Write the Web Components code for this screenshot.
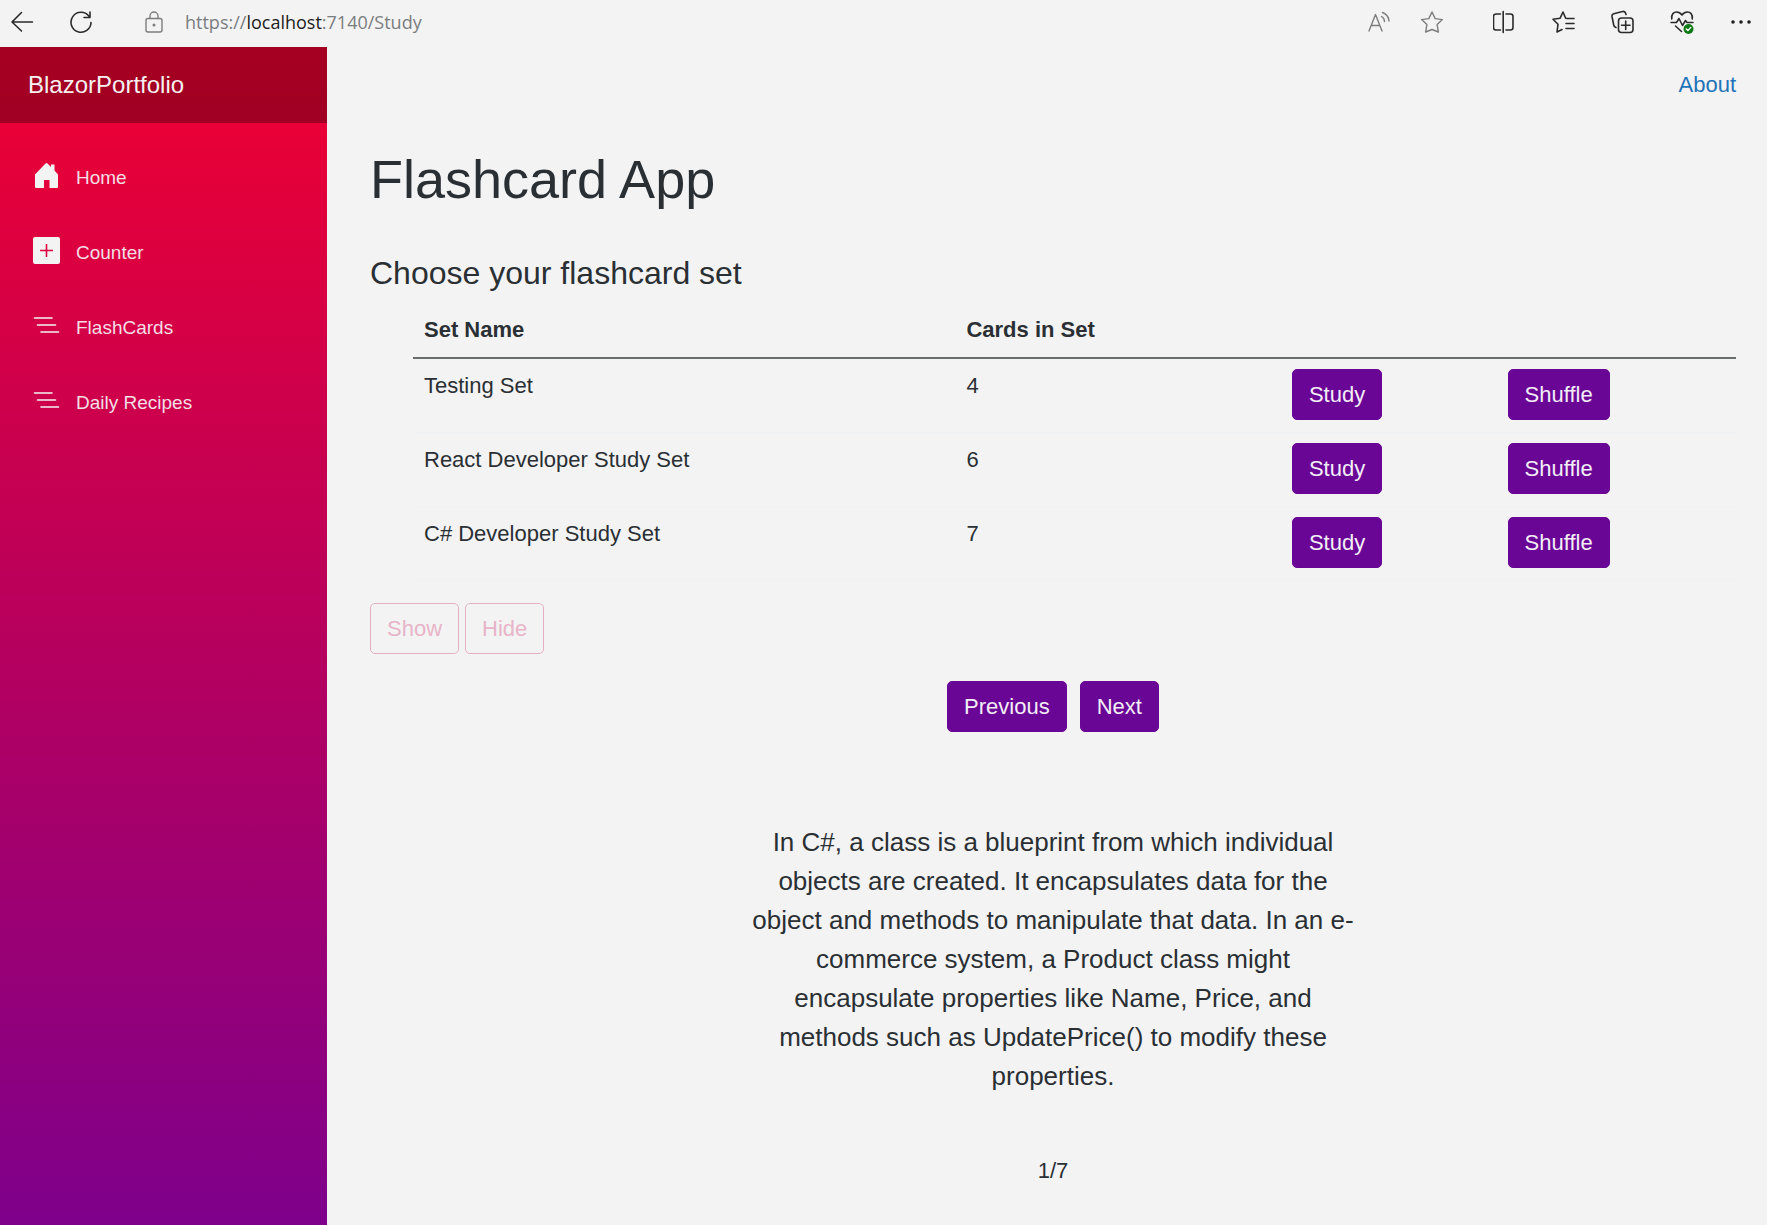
<!DOCTYPE html>
<html lang="en">
<head>
<meta charset="utf-8">
<title>Flashcard App</title>
<style>
  html, body { margin: 0; }
  body {
    min-height: 100vh;
    display: flex;
    flex-direction: column;
    background: #f3f3f3;
    color: #2a2f34;
    font: 22px/33px "Liberation Sans", Arial, sans-serif;
  }
</style>
</head>
<body>
<browser-bar></browser-bar>
<app-layout>
  <app-sidebar slot="sidebar" brand="BlazorPortfolio">
    <nav-link icon="home">Home</nav-link>
    <nav-link icon="plus">Counter</nav-link>
    <nav-link icon="list">FlashCards</nav-link>
    <nav-link icon="list">Daily Recipes</nav-link>
  </app-sidebar>
  <study-page></study-page>
</app-layout>

<script>
class BaseElement extends HTMLElement {
  connectedCallback() {
    if (this.shadowRoot) return;
    this.attachShadow({ mode: "open" }).innerHTML = this.render();
  }
}

/* Browser toolbar */
customElements.define("browser-bar", class extends BaseElement {
  render() {
    return `
<style>
  :host { display: block; }
  header { display: flex; align-items: center; height: 47px; padding: 0 14px 4px 10px; box-sizing: border-box; }
  button { border: 0; padding: 0; background: none; width: 24px; height: 24px; flex: none; }
  svg { display: block; width: 24px; height: 24px; fill: none; stroke: #2b2b2b; stroke-width: 1.6; stroke-linecap: round; stroke-linejoin: round; }
  .muted svg { stroke: #7d7d7d; stroke-width: 1.4; }
  .history { display: flex; gap: 35px; }
  .address { display: flex; align-items: center; flex: 1; gap: 19px; padding-left: 49px; }
  .url { color: #7a7d80; font: 18px/24px "Open Sans", "Noto Sans", sans-serif; }
  .url b { color: #1c1c1c; font-weight: 400; }
  .page { display: flex; gap: 29px; padding-right: 49px; }
  .tools { display: flex; gap: 35px; }
</style>
<header>
  <div class="history">
    <button aria-label="Back"><svg viewBox="0 0 24 24"><path d="M22.500 12H2M11.500 2.500L2 12l9.500 9"/></svg></button>
    <button aria-label="Refresh"><svg viewBox="0 0 24 24"><path d="M22 12.500A10 10 0 1 1 19.800 6M21 2v5.500h-6"/></svg></button>
  </div>
  <div class="address">
    <button class="muted" aria-label="Site information"><svg viewBox="0 0 24 24"><rect x="4" y="8.500" width="16" height="13.500" rx="2"/><path d="M8 8.500V6a4 4 0 0 1 8 0v2.500"/><circle cx="12" cy="15" r=".8" fill="#7d7d7d"/></svg></button>
    <span class="url">https://<b>localhost</b>:7140/Study</span>
  </div>
  <div class="page">
    <button class="muted" aria-label="Read aloud"><svg viewBox="0 0 24 24"><path d="M2 21L8.500 4.500 15 21M4.500 15.500h8M14.500 6.500a6 6 0 0 1 3 5M15.500 2.500a10 10 0 0 1 6.500 8.500"/></svg></button>
    <button class="muted" aria-label="Add to favorites"><svg viewBox="0 0 24 24"><path d="M12 2l3.200 6.600 7.200 1-5.300 5 1.300 7.400L12 19.500 5.600 22l1.300-7.400-5.300-5 7.200-1z"/></svg></button>
  </div>
  <div class="tools">
    <button aria-label="Split screen"><svg viewBox="0 0 24 24"><path d="M7.500 4H3a2.500 2.500 0 0 0-2.500 2.500v11A2.500 2.500 0 0 0 3 20h4.500M13 4h4.500A2.500 2.500 0 0 1 20 6.500v11a2.500 2.500 0 0 1-2.500 2.500H13M10.200 1.500v21" /></svg></button>
    <button aria-label="Favorites"><svg viewBox="0 0 24 24"><path d="M15 8.500L13.700 8.200 11 2 8 8.300l-7 1 5 5L5 22l5-2.500M15 8.500h7M14 13.500H22M14 18.500H22"/></svg></button>
    <button aria-label="Collections"><svg viewBox="0 0 24 24"><rect x="7.500" y="8" width="14.500" height="14.500" rx="3"/><path d="M14.700 11v8.500M10.500 15.200h8.500M5 17.500C3.500 17 3 16.500 2.700 15L1 6.500a2.500 2.500 0 0 1 1.800-2.800l8.700-2.200a2.500 2.500 0 0 1 3.100 1.700l.4 1.300"/></svg></button>
    <button aria-label="Browser essentials"><svg viewBox="0 0 24 24"><path d="M1.800 9C1 4 4 2 6.500 2 9 2 10.500 3 12 5c1.500-2 3-3 5.500-3S23 4 22.200 9M1 12.500h5.500l2.500-4 3.500 7 3-5 1.500 2h6M5.500 16l6 5.500"/><circle cx="18.500" cy="19" r="5" fill="#0f7b16" stroke="none"/><path d="M16.300 19l1.600 1.600 2.900-3.200" stroke="#fff" stroke-width="1.400"/></svg></button>
    <button aria-label="Settings and more"><svg viewBox="0 0 24 24"><g fill="#222" stroke="none"><circle cx="4" cy="12" r="1.800"/><circle cx="12" cy="12" r="1.800"/><circle cx="20" cy="12" r="1.800"/></g></svg></button>
  </div>
</header>`;
  }
});

/* Sidebar and content side by side */
customElements.define("app-layout", class extends BaseElement {
  render() {
    return `
<style>
  :host { display: flex; flex: 1; }
  main { flex: 1; min-width: 0; }
</style>
<slot name="sidebar"></slot>
<main><slot></slot></main>`;
  }
});

customElements.define("app-sidebar", class extends BaseElement {
  render() {
    return `
<style>
  :host { display: block; flex: 0 0 327px; background: linear-gradient(180deg, #f00030 0%, #7e008b 100%); }
  .brand { display: flex; align-items: center; height: 76px; padding: 0 0 2px 28px; box-sizing: border-box; background: rgba(0, 0, 0, .31); }
  .brand a { color: #f6f0f1; text-decoration: none; font-size: 24px; }
  nav { display: flex; flex-direction: column; gap: 11px; padding-top: 22px; }
</style>
<div class="brand"><a href="#">${this.getAttribute("brand")}</a></div>
<nav><slot></slot></nav>`;
  }
});

const NAV_ICONS = {
  home: `<path d="M2 12.500L12.500 1.500a1.500 1.500 0 0 1 2 0L18 5V2.500h3.500V8.500l3.500 4V25a1 1 0 0 1-1 1h-7.500v-8h-5.500v8H3a1 1 0 0 1-1-1z"/>`,
  plus: `<path fill-rule="evenodd" d="M2 0h23a2 2 0 0 1 2 2v23a2 2 0 0 1-2 2H2a2 2 0 0 1-2-2V2a2 2 0 0 1 2-2zm10.700 7v5.700H7v1.600h5.700V20h1.600v-5.700H20v-1.600h-5.700V7z"/>`,
  list: `<path d="M1.500 6H19M4.500 13H22.500M8 20h17.500" stroke="#f3f3f3" stroke-width="1.600" stroke-linecap="round"/>`
};

customElements.define("nav-link", class extends BaseElement {
  render() {
    return `
<style>
  :host { display: block; }
  a { display: flex; align-items: center; gap: 16px; height: 64px; padding-left: 33px; color: #f3dfe5; text-decoration: none; font-size: 19px; }
  svg { width: 27px; height: 30px; fill: #f3f3f3; }
</style>
<a href="#"><svg viewBox="0 0 27 30" aria-hidden="true">${NAV_ICONS[this.getAttribute("icon")]}</svg><span><slot></slot></span></a>`;
  }
});

customElements.define("app-button", class extends BaseElement {
  render() {
    const off = this.hasAttribute("disabled");
    return `
<style>
  :host { display: inline-block; vertical-align: top; }
  button { display: block; font: inherit; padding: 8px 16px; border: 1px solid #6a0696; border-radius: 5px; background: #6a0696; color: #f3eef6; }
  button:disabled { background: none; border-color: #e6afc5; color: #e8b4c8; }
</style>
<button type="button"${off ? " disabled" : ""}><slot></slot></button>`;
  }
});

customElements.define("set-table", class extends BaseElement {
  render() {
    const sets = [["Testing Set", 4], ["React Developer Study Set", 6], ["C# Developer Study Set", 7]];
    return `
<style>
  :host { display: block; padding-left: 43px; }
  table { width: 100%; table-layout: fixed; border-collapse: separate; border-spacing: 0; }
  th, td { padding: 11px; text-align: left; vertical-align: top; }
  thead th, thead td { border-bottom: 2px solid #6b6e6e; }
  tbody td { border-bottom: 1px solid #eff2f5; padding: 10px 11px 12px; }
  .name { width: 41%; } .count { width: 24.6%; } .study { width: 16.3%; }
</style>
<table>
  <colgroup><col class="name"><col class="count"><col class="study"><col></colgroup>
  <thead><tr><th>Set Name</th><th>Cards in Set</th><td></td><td></td></tr></thead>
  <tbody>${sets.map(([name, n]) => `
    <tr><td>${name}</td><td>${n}</td><td><app-button>Study</app-button></td><td><app-button>Shuffle</app-button></td></tr>`).join("")}
  </tbody>
</table>`;
  }
});

customElements.define("study-page", class extends BaseElement {
  render() {
    return `
<style>
  :host { display: block; padding: 0 31px 36px 43px; }
  .top { display: flex; justify-content: flex-end; align-items: center; height: 75px; }
  .top a { color: #1f74b8; text-decoration: none; }
  h1, h2, p { margin: 0; font-weight: 400; }
  h1 { font-size: 54px; line-height: 65px; margin: 25px 0 42px; }
  h2 { font-size: 32px; line-height: 38px; margin-bottom: 10px; }
  .reveal { display: flex; gap: 6px; margin-top: 22px; }
  .pager { display: flex; justify-content: center; gap: 13px; margin-top: 27px; }
  .card { max-width: 606px; margin: 91px auto 58px; font-size: 26px; line-height: 39px; text-align: center; }
  .progress { text-align: center; }
</style>
<div class="top"><a href="#">About</a></div>
<h1>Flashcard App</h1>
<h2>Choose your flashcard set</h2>
<set-table></set-table>
<div class="reveal"><app-button disabled>Show</app-button><app-button disabled>Hide</app-button></div>
<div class="pager"><app-button>Previous</app-button><app-button>Next</app-button></div>
<p class="card">In C#, a class is a blueprint from which individual objects are created. It encapsulates data for the object and methods to manipulate that data. In an e-commerce system, a Product class might encapsulate properties like Name, Price, and methods such as UpdatePrice() to modify these properties.</p>
<p class="progress">1/7</p>`;
  }
});
</script>
</body>
</html>
